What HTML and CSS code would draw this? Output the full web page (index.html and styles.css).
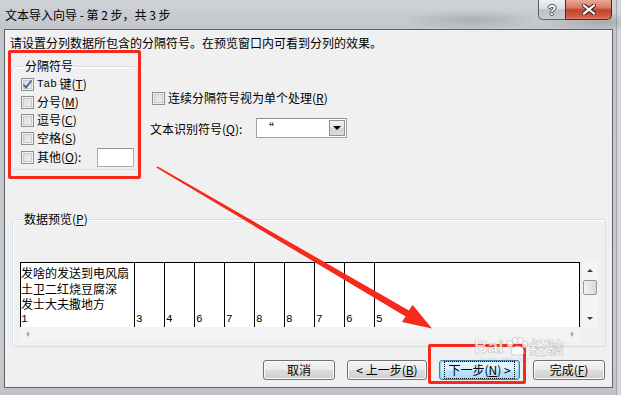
FILE: index.html
```html
<!DOCTYPE html>
<html lang="zh">
<head>
<meta charset="utf-8">
<title>文本导入向导</title>
<link rel="stylesheet" href="styles.css">
</head>
<body>
<div class="window">
  <div class="titlebar">
    <div class="title">文本导入向导 - 第 2 步，共 3 步</div>
    <div class="caption-btns">
      <div class="cbtn help">?</div>
      <div class="cbtn close">
        <svg width="14" height="11" viewBox="0 0 14 11"><path d="M2 1.5 L12 9.5 M12 1.5 L2 9.5" stroke="#3a2018" stroke-width="4.2" stroke-linecap="square"/><path d="M2 1.5 L12 9.5 M12 1.5 L2 9.5" stroke="#fff" stroke-width="2.2" stroke-linecap="square"/></svg>
      </div>
    </div>
  </div>
  <div class="client">
    <p class="intro">请设置分列数据所包含的分隔符号。在预览窗口内可看到分列的效果。</p>
    <div class="top">
      <fieldset class="group delims">
        <legend>分隔符号</legend>
        <div class="check-row"><span class="cb checked"><svg width="11" height="11" viewBox="0 0 11 11"><path d="M1.5 5.5 L4 8.5 L9.5 1.5" fill="none" stroke="#4b5d95" stroke-width="1.8"/></svg></span><span class="mono">Tab</span>&nbsp;键(<u>T</u>)</div>
        <div class="check-row"><span class="cb"></span>分号(<u>M</u>)</div>
        <div class="check-row"><span class="cb"></span>逗号(<u>C</u>)</div>
        <div class="check-row"><span class="cb"></span>空格(<u>S</u>)</div>
        <div class="check-row other"><span class="cb"></span><span class="other-label">其他(<u>O</u>):</span><span class="textbox"></span></div>
      </fieldset>
      <div class="options">
        <div class="check-row consec"><span class="cb"></span>连续分隔符号视为单个处理(<u>R</u>)</div>
        <div class="qualifier">
          <span class="q-label">文本识别符号(<u>Q</u>):</span>
          <div class="combo"><span class="combo-val">“</span><span class="combo-btn"><span class="tri-down"></span></span></div>
        </div>
      </div>
    </div>
    <fieldset class="group preview">
      <legend>数据预览(<u>P</u>)</legend>
      <div class="grid-wrap">
        <div class="grid">
          <div class="col first">
            <div>发啥的发送到电风扇</div>
            <div>土卫二红烧豆腐深</div>
            <div>发士大夫撒地方</div>
            <div>1</div>
          </div>
          <div class="col"><div>3</div></div>
          <div class="col"><div>4</div></div>
          <div class="col"><div>6</div></div>
          <div class="col"><div>7</div></div>
          <div class="col"><div>8</div></div>
          <div class="col"><div>8</div></div>
          <div class="col"><div>7</div></div>
          <div class="col"><div>6</div></div>
          <div class="col last"><div>5</div></div>
        </div>
        <div class="vscroll">
          <div class="sbtn"><span class="tri-up"></span></div>
          <div class="thumb"></div>
          <div class="sfill"></div>
          <div class="sbtn"><span class="tri-down small"></span></div>
        </div>
      </div>
      <div class="hscroll">
        <span class="tri-left"></span>
        <span class="tri-right"></span>
      </div>
    </fieldset>
    <div class="buttons">
      <div class="btn w72">取消</div>
      <div class="btn w80">&lt; 上一步(<u>B</u>)</div>
      <div class="btn w81 default"><span class="focus">下一步(<u>N</u>) &gt;</span></div>
      <div class="btn w72">完成(<u>F</u>)</div>
    </div>
  </div>

  <div class="mark mark1"></div>
  <div class="mark mark2"></div>
  <svg class="arrow" width="621" height="395" viewBox="0 0 621 395">
    <polygon points="157.4,166.2 409,310.6 412.5,304.8 432,328.5 401.8,322 405.6,316.4 156.6,167.8" fill="#f52a1c"/>
  </svg>
  <div class="watermark">
    <div class="wm-logo">
      <span class="wm-bai">Bai</span>
      <svg class="paw" width="24" height="20" viewBox="0 0 24 20"><g fill="rgba(255,255,255,.9)" stroke="rgba(140,140,140,.55)" stroke-width=".8"><ellipse cx="5" cy="7" rx="3" ry="3.6"/><ellipse cx="10" cy="3.5" rx="2.8" ry="3.3"/><ellipse cx="15.5" cy="3.5" rx="2.8" ry="3.3"/><ellipse cx="20" cy="7.5" rx="2.8" ry="3.4"/><path d="M6 16 C6 11 9 9 12.5 9 C16 9 19 11 19 16 C19 19 6 19 6 16Z"/></g></svg>
      <span class="wm-jy">经验</span>
    </div>
    <div class="wm-url">jingyan.baidu.com</div>
  </div>
</div>
</body>
</html>
```

FILE: styles.css
```css
* { box-sizing: border-box; }

body {
  margin: 0;
  font-family: "Noto Sans CJK SC", "Liberation Sans", sans-serif;
  font-size: 12px;
  color: #000;
  background: #c3c7cb;
}

.window {
  position: relative;
  width: 621px;
  height: 395px;
  overflow: hidden;
  background:
    radial-gradient(ellipse 70px 10px at 470px 20px, rgba(120,126,132,.35), transparent),
    radial-gradient(ellipse 60px 9px at 600px 22px, rgba(110,116,122,.35), transparent),
    linear-gradient(90deg, transparent 616px, #a2a6aa 616px, #a2a6aa 617px, #d3d6d9 617px),
    linear-gradient(#cfd3d7, #c3c7cb 28px, #c7cbcf 360px, #bfc3c7);
}

.titlebar {
  height: 29px;
  display: flex;
  align-items: flex-start;
}

.title {
  padding: 8px 0 0 5px;
  line-height: 14px;
  font-size: 12px;
  color: #000;
}

.caption-btns {
  margin-left: auto;
  margin-right: 9px;
  display: flex;
}

.cbtn {
  height: 20px;
  display: flex;
  align-items: center;
  justify-content: center;
}

.help {
  width: 27px;
  border: 1px solid #58606a;
  border-top: none;
  border-right: none;
  border-radius: 0 0 0 5px;
  background: linear-gradient(#eef0f2, #d9dde1 45%, #bcc2c8 52%, #c9ced3 100%);
  color: #fff;
  font-family: "Liberation Sans", sans-serif;
  font-weight: bold;
  font-size: 14px;
  text-shadow: 0 0 1px #333, 1px 0 0 #555, -1px 0 0 #555, 0 1px 0 #555, 0 -1px 0 #555;
}

.close {
  width: 47px;
  border: 1px solid #4e2b22;
  border-top: none;
  border-radius: 0 0 5px 0;
  background: linear-gradient(#e9a897, #d97a66 40%, #c2442e 52%, #cf5a43 85%, #dd7e66);
}

.client {
  margin-left: 4px;
  width: 609px;
  height: 359px;
  border: 1px solid #5e6166;
  background: #f0f0f0;
}

.intro {
  margin: 6px 0 0 5px;
  line-height: 14px;
}

.top {
  display: flex;
  margin-top: 9px;
}

.group {
  margin: 0;
  border: 1px solid #d5dfe5;
  border-radius: 3px;
  box-shadow: inset 1px 1px 0 #fff;
  min-width: 0;
}

.group legend {
  margin-left: 3px;
  padding: 0 1px;
  line-height: 14px;
}

.delims {
  margin-left: 7px;
  width: 126px;
  height: 111px;
  padding: 2px 0 2px 8px;
}

.check-row {
  display: flex;
  align-items: center;
  height: 18px;
  white-space: nowrap;
  line-height: 14px;
}

.check-row.other { height: 20px; }

.cb {
  flex: none;
  width: 13px;
  height: 13px;
  margin-right: 3px;
  border: 1px solid #8e8f8f;
  background: linear-gradient(135deg, #d6d8db, #f5f5f5);
  box-shadow: inset 0 0 0 1px #f1f1f1, inset 0 0 0 2px #c8cbce;
  display: flex;
  align-items: center;
  justify-content: center;
}

.mono {
  font-family: "Liberation Mono", monospace;
  font-size: 11px;
}

.other-label { width: 60px; }

.textbox {
  width: 37px;
  height: 19px;
  background: #fff;
  border: 1px solid #a5acb5;
  border-top-color: #8e959e;
}

.options {
  display: flex;
  flex-direction: column;
}

.consec {
  margin: 30px 0 0 14px;
}

.qualifier {
  display: flex;
  align-items: center;
  height: 20px;
  margin: 11px 0 0 12px;
}

.q-label { width: 106px; }

.combo {
  display: flex;
  width: 91px;
  height: 20px;
  background: #fff;
  border: 1px solid #9da3aa;
  border-top-color: #8a9098;
}

.combo-val {
  flex: 1;
  padding: 1px 0 0 5px;
  line-height: 16px;
}

.combo-btn {
  width: 16px;
  margin: 1px 1px 1px 0;
  border: 1px solid #8d9299;
  background: linear-gradient(#f3f3f3, #e4e4e4 50%, #d4d4d4 51%, #dadada);
  display: flex;
  align-items: center;
  justify-content: center;
}

.tri-down {
  width: 0;
  height: 0;
  border-left: 4px solid transparent;
  border-right: 4px solid transparent;
  border-top: 4px solid #000;
}

.tri-down.small {
  border-left-width: 3.5px;
  border-right-width: 3.5px;
  border-top: 3px solid #3c3c3c;
}

.tri-up {
  width: 0;
  height: 0;
  border-left: 3.5px solid transparent;
  border-right: 3.5px solid transparent;
  border-bottom: 3px solid #3c3c3c;
}

.preview {
  margin: 42px 0 0 7px;
  width: 594px;
  height: 135px;
  padding: 36px 7px 5px 7px;
}

.grid-wrap {
  display: flex;
  gap: 1px;
  height: 65px;
}

.grid {
  display: flex;
  width: 560px;
  height: 65px;
  background: #fff;
  border: 1px solid #000;
  border-bottom: none;
  line-height: 15.5px;
}

.col {
  width: 30px;
  border-left: 1px solid #000;
  display: flex;
  flex-direction: column;
  justify-content: flex-end;
  padding-left: 1px;
  font-family: "Liberation Mono", monospace;
  font-size: 11px;
}

.col.first {
  width: 113px;
  border-left: none;
  padding-left: 0;
  padding-top: 2px;
  justify-content: flex-start;
  font-family: "Noto Sans CJK SC", sans-serif;
  font-size: 12px;
  white-space: nowrap;
}

.col.first div:last-child {
  font-family: "Liberation Mono", monospace;
  font-size: 11px;
}

.col.last { flex: 1; }

.vscroll {
  width: 17px;
  height: 65px;
  display: flex;
  flex-direction: column;
  background: #f4f4f4;
  border-left: 1px solid #ececec;
}

.sbtn {
  height: 17px;
  display: flex;
  align-items: center;
  justify-content: center;
}

.thumb {
  margin: 1px 1px 0 1px;
  height: 15px;
  border: 1px solid #979797;
  border-radius: 2px;
  background: linear-gradient(90deg, #f2f2f2, #e6e6e6 50%, #d7d7d7);
}

.sfill { flex: 1; }

.hscroll {
  width: 560px;
  height: 14px;
  background: #f3f3f3;
  display: flex;
  align-items: center;
  justify-content: space-between;
  padding: 0 6px 0 6px;
}

.tri-left {
  width: 0;
  height: 0;
  border-top: 3.5px solid transparent;
  border-bottom: 3.5px solid transparent;
  border-right: 3px solid #a8a8a8;
}

.tri-right {
  width: 0;
  height: 0;
  border-top: 3.5px solid transparent;
  border-bottom: 3.5px solid transparent;
  border-left: 3px solid #a8a8a8;
}

.buttons {
  display: flex;
  justify-content: flex-end;
  gap: 12px;
  margin-top: 13px;
  padding-right: 7px;
}

.btn {
  height: 20px;
  border: 1px solid #707070;
  border-radius: 3px;
  background: linear-gradient(#f2f2f2, #ebebeb 48%, #dddddd 52%, #cfcfcf);
  box-shadow: inset 0 0 0 1px #fcfcfc;
  display: flex;
  align-items: center;
  justify-content: center;
  line-height: 14px;
  white-space: nowrap;
}

.w72 { width: 72px; }
.w80 { width: 80px; }
.w81 { width: 81px; }
.buttons .btn:last-child { margin-left: 1px; }

.btn.default {
  border-color: #3c7fb1;
  box-shadow: inset 0 0 0 1px #7fd4f5;
  background: linear-gradient(#eaf6fd, #d9f0fc 48%, #bee6fd 52%, #a7d9f5);
}

.focus {
  outline: 1px dotted #000;
  outline-offset: 1px;
  padding: 0 2px;
}

.mark {
  position: absolute;
  border: 3px solid #f52a1c;
  border-radius: 2px;
}

.mark1 {
  left: 8px;
  top: 50px;
  width: 133px;
  height: 129px;
}

.mark2 {
  left: 428px;
  top: 344px;
  width: 98px;
  height: 40px;
}

.arrow {
  position: absolute;
  left: 0;
  top: 0;
  pointer-events: none;
}

.watermark {
  position: absolute;
  left: 474px;
  top: 337px;
  display: flex;
  flex-direction: column;
  opacity: .85;
  pointer-events: none;
}

.wm-logo {
  display: flex;
  align-items: center;
  gap: 1px;
  height: 19px;
}

.wm-bai {
  font-family: "Liberation Sans", sans-serif;
  font-weight: bold;
  font-size: 19px;
  line-height: 19px;
  color: rgba(255,255,255,.92);
  -webkit-text-stroke: .7px rgba(140,140,140,.6);
}

.wm-jy {
  font-family: "Noto Sans CJK SC", sans-serif;
  font-weight: bold;
  font-size: 17px;
  line-height: 19px;
  color: rgba(255,255,255,.92);
  -webkit-text-stroke: .6px rgba(140,140,140,.6);
}

.wm-url {
  margin-left: 6px;
  font-family: "Liberation Sans", sans-serif;
  font-size: 6px;
  line-height: 6px;
  color: rgba(120,150,190,.4);
  white-space: nowrap;
}
```
